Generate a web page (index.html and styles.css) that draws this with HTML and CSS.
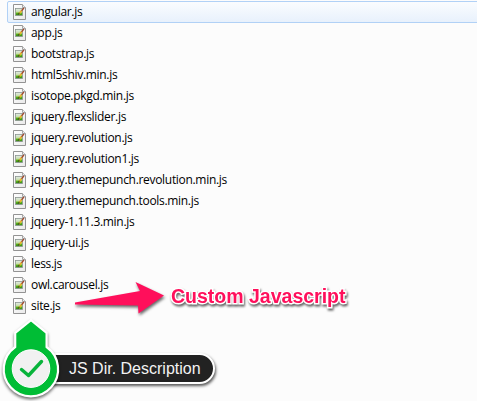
FILE: index.html
```html
<!DOCTYPE html>
<html lang="en">
<head>
<meta charset="utf-8">
<title>JS directory</title>
<link rel="stylesheet" href="styles.css">
</head>
<body>
<svg class="defs" width="0" height="0" aria-hidden="true">
  <defs>
    <linearGradient id="paint" x1="0" y1="0" x2="0" y2="1">
      <stop offset="0" stop-color="#e4eceb"/><stop offset=".5" stop-color="#c5dba5"/><stop offset=".65" stop-color="#62bb18"/><stop offset="1" stop-color="#2c8417"/>
    </linearGradient>
    <linearGradient id="paper" x1="0" y1="0" x2="1" y2="1">
      <stop offset="0" stop-color="#fff"/><stop offset="1" stop-color="#e9e9e9"/>
    </linearGradient>
    <symbol id="file" viewBox="0 0 13 16">
      <path d="M.5 .5H9.5L12.5 3.5V15.5H.5Z" fill="url(#paper)" stroke="#939393"/>
      <path d="M9.5 .5V3.5H12.5" fill="#eee" stroke="#a5a5a5"/>
      <rect x="2.5" y="4.5" width="7" height="7" fill="url(#paint)" stroke="#8c9690" stroke-width=".8"/>
      <path d="M6 10L8.7 6.5" stroke="#e9b22c" stroke-width="1.8"/>
      <path d="M8.5 6.8L11 4" stroke="#a3472c" stroke-width="1.3"/>
      <path d="M4.8 10.5L6.5 9" stroke="#425c22" stroke-width="1.2"/>
    </symbol>
  </defs>
</svg>
<main class="window">
  <ul class="files">
    <li class="file selected"><svg><use href="#file"/></svg><span>angular.js</span></li>
    <li class="file"><svg><use href="#file"/></svg><span>app.js</span></li>
    <li class="file"><svg><use href="#file"/></svg><span>bootstrap.js</span></li>
    <li class="file"><svg><use href="#file"/></svg><span>html5shiv.min.js</span></li>
    <li class="file"><svg><use href="#file"/></svg><span>isotope.pkgd.min.js</span></li>
    <li class="file"><svg><use href="#file"/></svg><span>jquery.flexslider.js</span></li>
    <li class="file"><svg><use href="#file"/></svg><span>jquery.revolution.js</span></li>
    <li class="file"><svg><use href="#file"/></svg><span>jquery.revolution1.js</span></li>
    <li class="file"><svg><use href="#file"/></svg><span>jquery.themepunch.revolution.min.js</span></li>
    <li class="file"><svg><use href="#file"/></svg><span>jquery.themepunch.tools.min.js</span></li>
    <li class="file"><svg><use href="#file"/></svg><span>jquery-1.11.3.min.js</span></li>
    <li class="file"><svg><use href="#file"/></svg><span>jquery-ui.js</span></li>
    <li class="file"><svg><use href="#file"/></svg><span>less.js</span></li>
    <li class="file"><svg><use href="#file"/></svg><span>owl.carousel.js</span></li>
    <li class="file"><svg><use href="#file"/></svg><span>site.js</span></li>
  </ul>
  <svg class="arrow" viewBox="0 0 90 34">
    <path d="M0 20.5L65 9L60.5 0L89 13.5L63.5 31.5L63 23.5L0 22.5Z" fill="#ff0f5b"/>
  </svg>
  <div class="note">Custom Javascript</div>
  <div class="caption">JS Dir. Description</div>
  <svg class="marker" viewBox="0 0 62 82">
    <path d="M15.2 28V13.8L31 1.2L46.6 13.8V28A27.2 27.2 0 1 1 15.2 28Z" fill="#00bd35" stroke="#fff" stroke-width="2.2"/>
    <circle cx="31" cy="49.6" r="18.8" fill="#f1f1f1" stroke="#fff" stroke-width="1"/>
    <path d="M21.5 50.5L28.5 56.5L41.5 42.5" fill="none" stroke="#08b43b" stroke-width="3.4" stroke-linecap="round" stroke-linejoin="round"/>
  </svg>
</main>
</body>
</html>
```
FILE: styles.css
```css
body {
  margin: 0;
  background: #fcfcfc;
}

.defs {
  position: absolute;
}

.window {
  position: relative;
  width: 477px;
  height: 401px;
  overflow: hidden;
}

.files {
  margin: 0;
  padding: 1px 0 0 7px;
  list-style: none;
}

.file {
  display: flex;
  align-items: center;
  gap: 5px;
  box-sizing: border-box;
  height: 22px;
  margin: 0 -4px -1px 0;
  padding-left: 5px;
  border: 1px solid transparent;
  border-radius: 2px;
  color: #000;
  font: 12px/20px "Open Sans", "Noto Sans", sans-serif;
  letter-spacing: -0.31px;
}

.file svg {
  width: 13px;
  height: 16px;
}

.selected {
  border-color: #b1d1f6;
  background: linear-gradient(#fafcfe, #e8f1fc);
}

.arrow {
  position: absolute;
  left: 75px;
  top: 282px;
  width: 90px;
  height: 34px;
  overflow: visible;
  filter: drop-shadow(1px 2px 1.5px rgba(0, 0, 0, 0.6));
}

.note {
  position: absolute;
  left: 171px;
  top: 284px;
  color: #ff0f5b;
  font: bold 19.5px/24px "Liberation Sans", Arial, sans-serif;
  white-space: nowrap;
  -webkit-text-stroke: 3px #fff;
  paint-order: stroke fill;
  filter: drop-shadow(1px 2px 1.2px rgba(0, 0, 0, 0.6));
}

.caption {
  position: absolute;
  left: 40px;
  top: 353px;
  box-sizing: border-box;
  width: 175px;
  height: 31px;
  padding-left: 27px;
  border: 2px solid #fff;
  border-radius: 0 16px 16px 0;
  background: #222;
  box-shadow: 1px 2px 3px rgba(0, 0, 0, 0.65);
  color: #f3f3f3;
  font: 16px/27px "Liberation Sans", Arial, sans-serif;
  white-space: nowrap;
}

.marker {
  position: absolute;
  left: 0;
  top: 319px;
  width: 62px;
  height: 82px;
  overflow: visible;
  filter: drop-shadow(0 2px 1.5px rgba(0, 0, 0, 0.55));
}
```
